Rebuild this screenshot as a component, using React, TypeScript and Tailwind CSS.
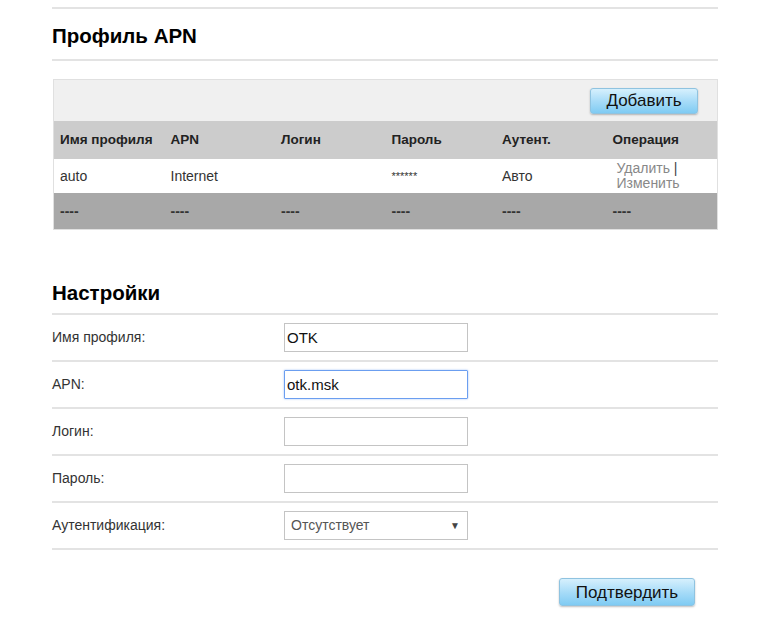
import React from "react";

const cols = ["Имя профиля", "APN", "Логин", "Пароль", "Аутент.", "Операция"];

function BlueButton({ label, className }: { label: string; className?: string }) {
  return (
    <button
      className={
        "rounded-[3px] border border-[#8fc3e0] bg-gradient-to-b from-[#d6f0fd] via-[#a8dcf8] to-[#7fcbf3] text-[17px] leading-none text-[#111] shadow-[0_1px_2px_rgba(0,0,0,0.25)] " +
        (className || "")
      }
    >
      {label}
    </button>
  );
}

function FormRow({ label, children }: { label: string; children: React.ReactNode }) {
  return (
    <div className="flex h-[47px] items-center border-b-2 border-[#e3e3e3]">
      <div className="w-[232px] text-[14px] text-[#333]">{label}</div>
      {children}
    </div>
  );
}

export default function App() {
  return (
    <div className="min-h-[621px] bg-white font-['Liberation_Sans',Arial,sans-serif]">
      <div className="ml-[52px] w-[666px] pt-[7px]">
        {/* Профиль APN */}
        <div className="border-t-2 border-[#e3e3e3]" />
        <div className="flex h-[52px] items-center border-b-2 border-[#e3e3e3] pt-[4px]">
          <h1 className="text-[20.5px] font-bold text-black">Профиль APN</h1>
        </div>

        <div className="mt-[18px] ml-px border border-[#e0e0e0]">
          <div className="flex h-[41px] items-center justify-end bg-[#f0f0f0] pr-[19px]">
            <BlueButton label="Добавить" className="h-[26px] w-[108px]" />
          </div>
          <div className="grid h-[38px] grid-cols-6 items-center bg-[#cccccc] text-[13.5px] font-bold text-[#222]">
            {cols.map((c) => (
              <div key={c} className="pl-[6px]">
                {c}
              </div>
            ))}
          </div>
          <div className="grid h-[34px] grid-cols-6 items-center bg-white text-[14px] text-[#333]">
            <div className="pl-[6px]">auto</div>
            <div className="pl-[6px]">Internet</div>
            <div className="pl-[6px]"></div>
            <div className="pl-[6px] text-[11px]">******</div>
            <div className="pl-[6px]">Авто</div>
            <div className="pl-[10px] text-[14px] leading-[15px] text-[#888]">
              Удалить <span className="text-[#444]">|</span>
              <br />
              Изменить
            </div>
          </div>
          <div className="grid h-[36px] grid-cols-6 items-center bg-[#a8a8a8] text-[14px] font-bold text-[#333]">
            {cols.map((c) => (
              <div key={c} className="pl-[6px]">
                ----
              </div>
            ))}
          </div>
        </div>

        {/* Настройки */}
        <div className="mt-[43px] flex h-[42px] items-center border-b-2 border-[#e3e3e3]">
          <h2 className="text-[20.5px] font-bold text-black">Настройки</h2>
        </div>

        <FormRow label="Имя профиля:">
          <input
            defaultValue="OTK"
            className="h-[29px] w-[184px] border border-[#c4c4c4] px-[2px] text-[15px] text-[#111] outline-none"
          />
        </FormRow>
        <FormRow label="APN:">
          <input
            defaultValue="otk.msk"
            className="h-[29px] w-[184px] rounded-[1px] border border-[#6b9ef0] px-[2px] text-[15px] text-[#111] shadow-[0_0_2px_rgba(80,140,240,0.6)] outline-none"
          />
        </FormRow>
        <FormRow label="Логин:">
          <input className="h-[29px] w-[184px] border border-[#c4c4c4] px-[2px] text-[15px] outline-none" />
        </FormRow>
        <FormRow label="Пароль:">
          <input className="h-[29px] w-[184px] border border-[#c4c4c4] px-[2px] text-[15px] outline-none" />
        </FormRow>
        <FormRow label="Аутентификация:">
          <div className="flex h-[29px] w-[184px] items-center justify-between border border-[#c4c4c4] pl-[6px] pr-[7px] text-[14px] text-[#555]">
            <span>Отсутствует</span>
            <span className="text-[10px] text-[#444]">▼</span>
          </div>
        </FormRow>

        <div className="flex justify-end pr-[23px] pt-[28px]">
          <BlueButton label="Подтвердить" className="h-[28px] w-[136px]" />
        </div>
      </div>
    </div>
  );
}
